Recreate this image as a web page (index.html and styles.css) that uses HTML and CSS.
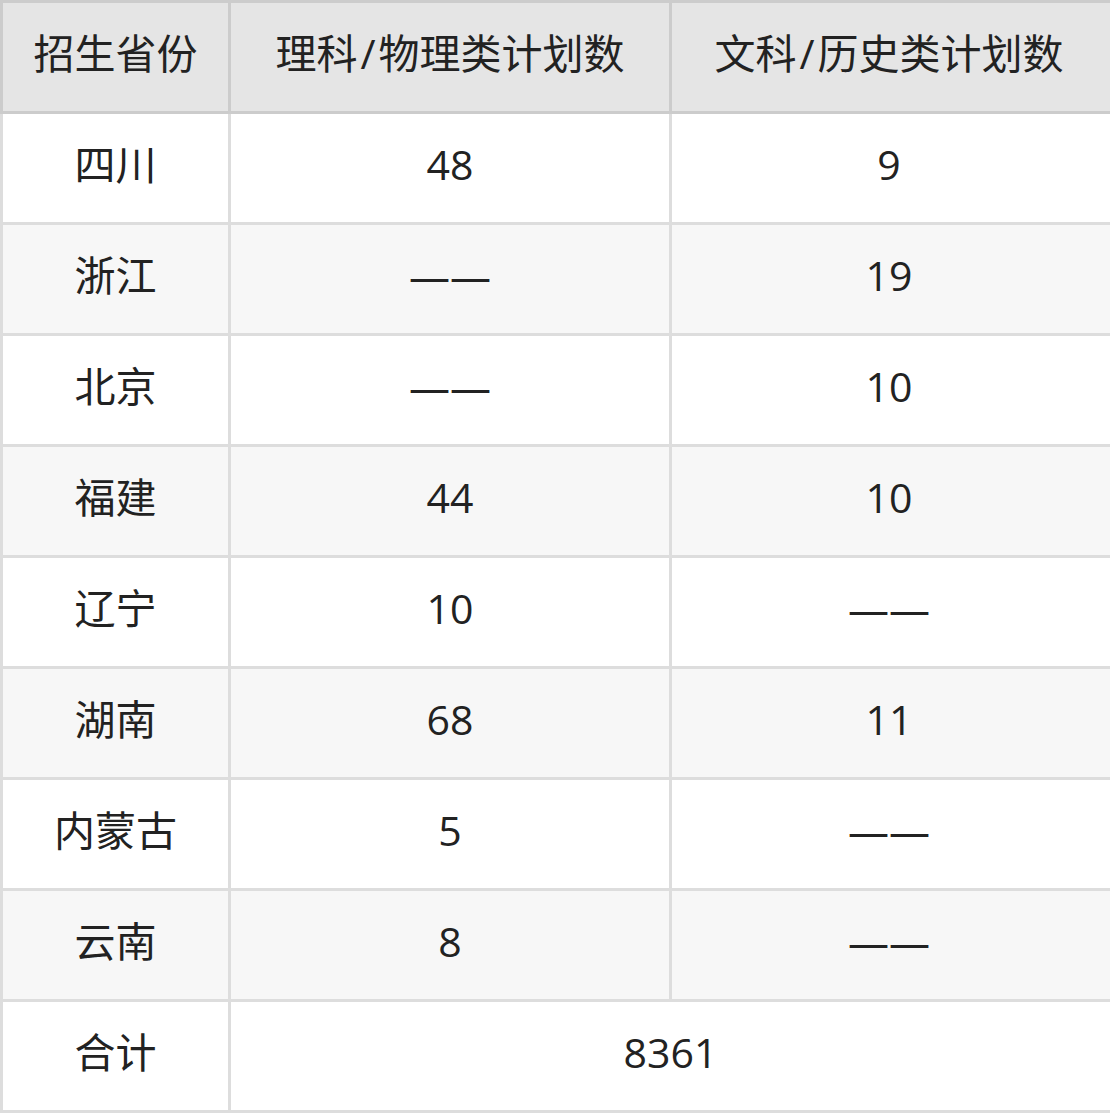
FILE: index.html
```html
<!DOCTYPE html>
<html lang="zh">
<head>
<meta charset="utf-8">
<link rel="stylesheet" href="styles.css">
</head>
<body>
<table class="plan">
  <colgroup>
    <col class="c1"><col class="c2"><col class="c3">
  </colgroup>
  <thead>
    <tr><th>招生省份</th><th>理科<span class="sl">/</span>物理类计划数</th><th>文科<span class="sl">/</span>历史类计划数</th></tr>
  </thead>
  <tbody>
    <tr><td>四川</td><td>48</td><td>9</td></tr>
    <tr><td>浙江</td><td>——</td><td>19</td></tr>
    <tr><td>北京</td><td>——</td><td>10</td></tr>
    <tr><td>福建</td><td>44</td><td>10</td></tr>
    <tr><td>辽宁</td><td>10</td><td>——</td></tr>
    <tr><td>湖南</td><td>68</td><td>11</td></tr>
    <tr><td>内蒙古</td><td>5</td><td>——</td></tr>
    <tr><td>云南</td><td>8</td><td>——</td></tr>
    <tr><td>合计</td><td colspan="2">8361</td></tr>
  </tbody>
</table>
</body>
</html>
```
FILE: styles.css
```css
html, body {
  margin: 0;
  padding: 0;
  background: #ffffff;
}
.plan {
  border-collapse: collapse;
  table-layout: fixed;
  width: 1110px;
  font-family: "Open Sans", "Noto Sans CJK SC", sans-serif;
  font-size: 41px;
  color: #222222;
}
.c1 { width: 228px; }
.c2 { width: 441px; }
.c3 { width: 441px; }
.plan th, .plan td {
  height: 100px;
  padding: 0 0 8px 0;
  text-align: center;
  vertical-align: middle;
  border: 3px solid #dddddd;
  font-weight: normal;
  line-height: 1;
}
.plan th:nth-child(3), .plan td:nth-child(3) {
  padding-right: 4px;
}
.plan td[colspan] {
  padding-right: 0;
}
.plan th {
  background: #e5e5e5;
  border-color: #cccccc;
}
.plan .sl {
  margin: 0 3px;
}
.plan tbody tr:nth-child(even) td {
  background: #f7f7f7;
}
```
